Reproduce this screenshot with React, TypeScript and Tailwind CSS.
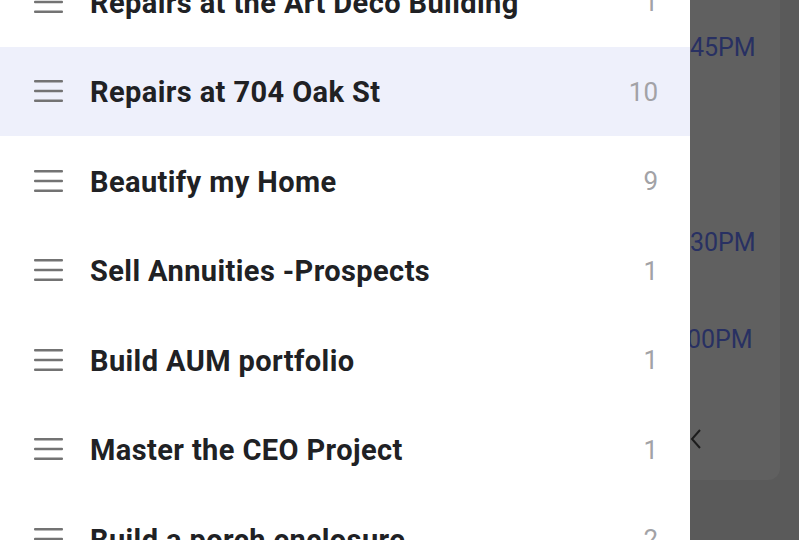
const projects = [
  { name: 'Repairs at the Art Deco Building', count: 1 },
  { name: 'Repairs at 704 Oak St', count: 10, active: true },
  { name: 'Beautify my Home', count: 9 },
  { name: 'Sell Annuities -Prospects', count: 1 },
  { name: 'Build AUM portfolio', count: 1 },
  { name: 'Master the CEO Project', count: 1 },
  { name: 'Build a porch enclosure', count: 2 },
]

function DragHandle() {
  return (
    <svg width="29" height="22" viewBox="0 0 29 22" className="shrink-0">
      <rect x="0" y="0" width="29" height="2.4" rx="1" fill="#737373" />
      <rect x="0" y="9.8" width="29" height="2.4" rx="1" fill="#737373" />
      <rect x="0" y="19.6" width="29" height="2.4" rx="1" fill="#737373" />
    </svg>
  )
}

export default function App() {
  return (
    <div
      className="flex w-[799px] h-[540px] overflow-hidden bg-[#5a5a5a]"
      style={{ fontFamily: 'Roboto, "Noto Sans", sans-serif' }}
    >
      <div className="w-[690px] shrink-0 bg-white overflow-hidden">
        <div className="mt-[-43px]">
          {projects.map((p) => (
            <div
              key={p.name}
              className={`flex items-center h-[89.5px] pl-[34px] pr-[32px] ${p.active ? 'bg-[#eef0fb]' : ''}`}
            >
              <DragHandle />
              <span className="ml-[27px] flex-1 pt-[3px] text-[29px] font-bold tracking-[0.4px] text-[#202124] whitespace-nowrap">
                {p.name}
              </span>
              <span className="pt-[2px] text-[26px] text-[#a2a2a6]">{p.count}</span>
            </div>
          ))}
        </div>
      </div>

      <div className="flex-1 overflow-hidden">
        <div className="w-[90px] h-[480px] bg-[#606060] rounded-br-[12px] text-[#283062] text-[25px] leading-none">
          <div className="pt-[35px] ml-0">45PM</div>
          <div className="mt-[170px]">30PM</div>
          <div className="mt-[72px] ml-[-3px]">00PM</div>
          <div className="mt-[76px]">
            <svg width="12" height="22" viewBox="0 0 12 22">
              <path d="M10 2 L2 11 L10 20" fill="none" stroke="#1c1c1c" strokeWidth="2" />
            </svg>
          </div>
        </div>
      </div>
    </div>
  )
}
